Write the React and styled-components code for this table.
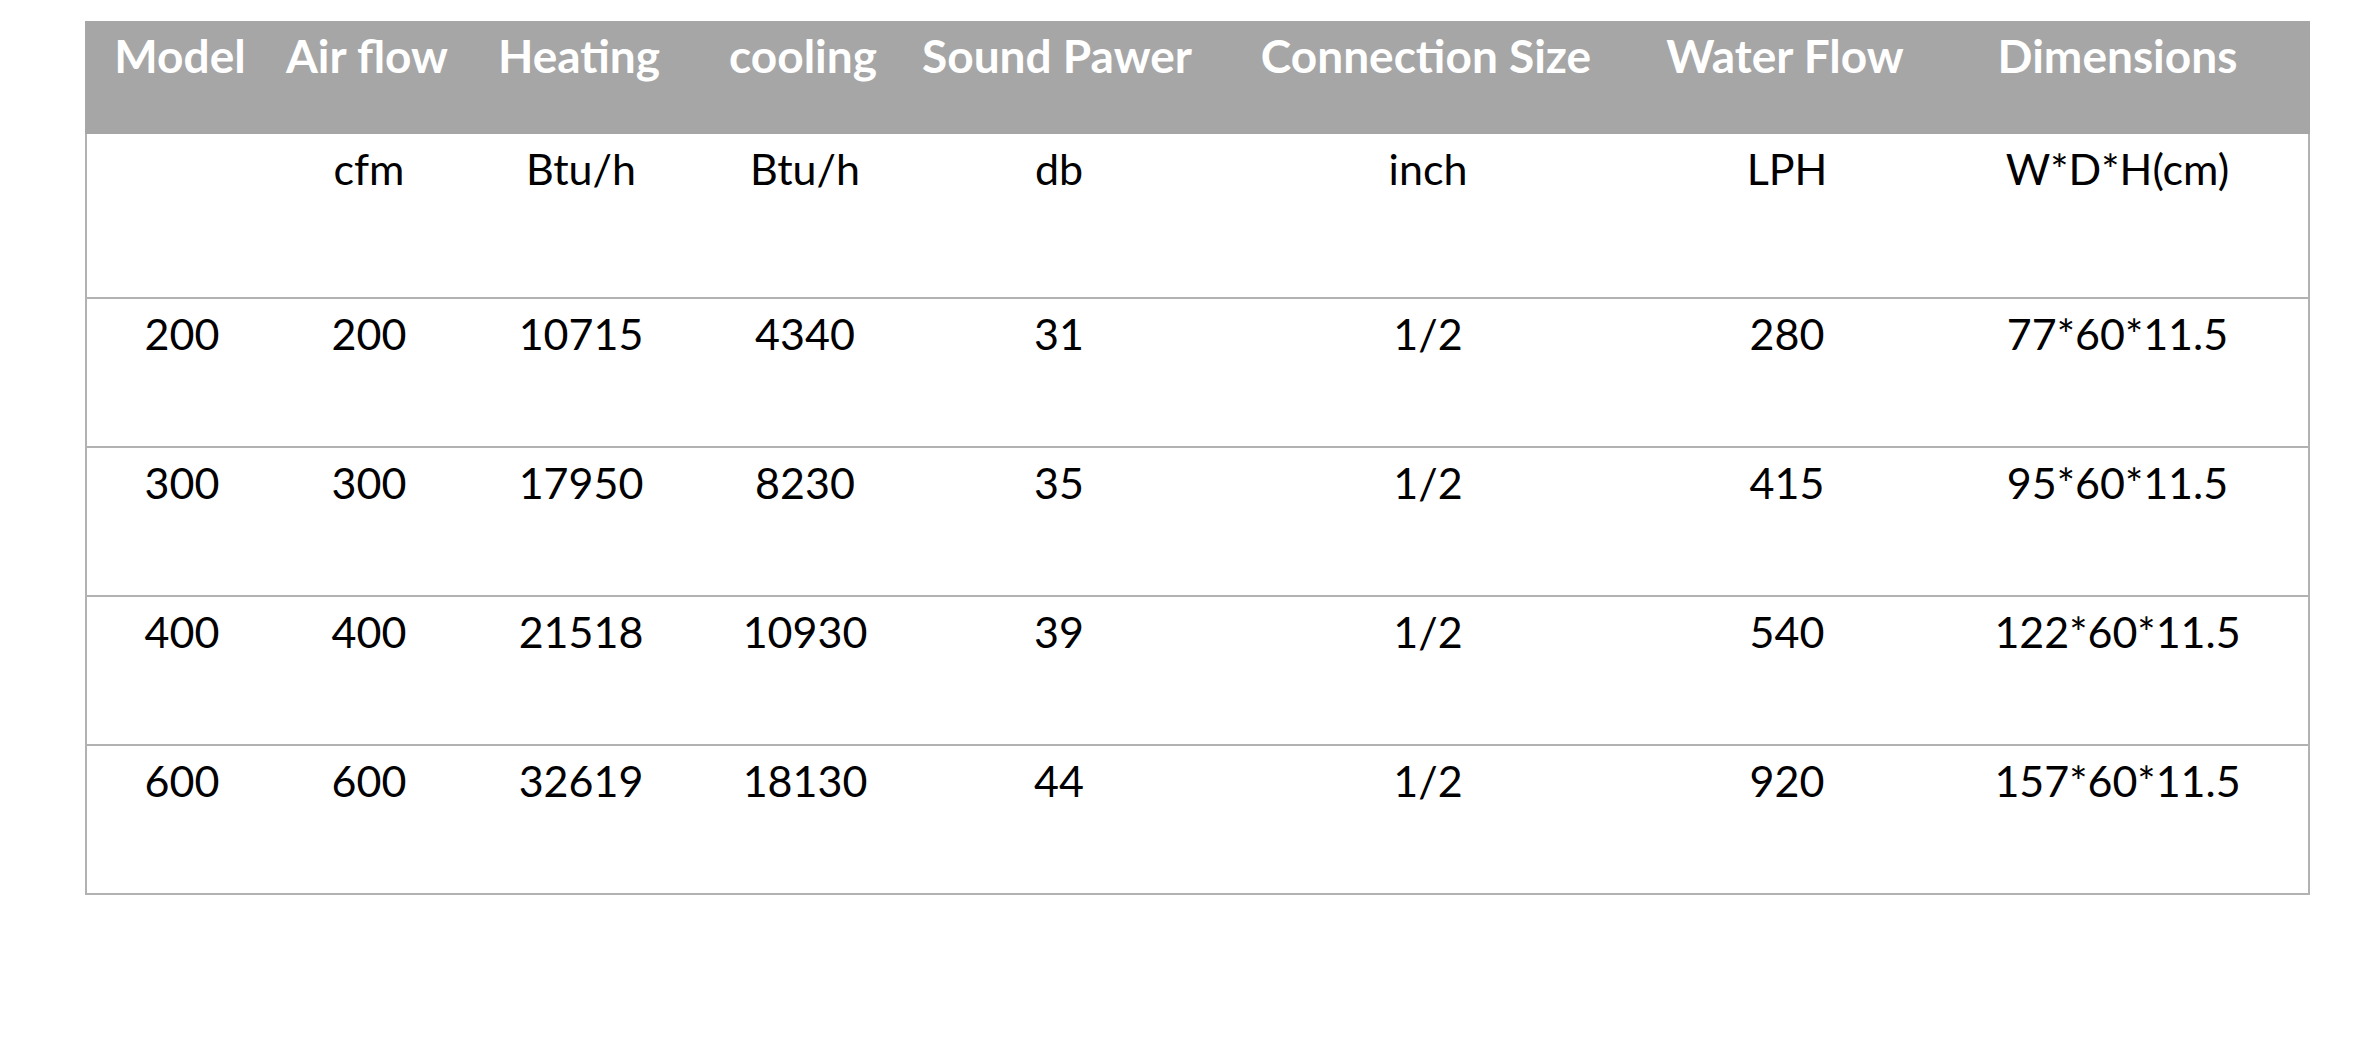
import React from 'react';
import styled, { createGlobalStyle } from 'styled-components';

const GlobalStyle = createGlobalStyle`
  html, body {
    margin: 0;
    padding: 0;
    background: #ffffff;
  }
  body {
    font-family: Lato, "Open Sans", "Liberation Sans", sans-serif;
  }
`;

const Page = styled.div`
  width: 2362px;
  height: 1063px;
  padding: 21px 0 0 85px;
  box-sizing: border-box;
  background: #ffffff;
`;

const Table = styled.div`
  width: 2225px;
  border-left: 2px solid #b2b2b2;
  border-right: 2px solid #b2b2b2;
  border-bottom: 2px solid #b2b2b2;
  box-sizing: border-box;
`;

const Row = styled.div`
  display: grid;
  grid-template-columns: 190px 184px 240px 208px 300px 438px 280px 1fr;
  height: ${(p) => p.$height}px;
  box-sizing: border-box;
  background: ${(p) => (p.$head ? '#a6a6a6' : '#ffffff')};
  border-top: ${(p) => (p.$divided ? '2px solid #b2b2b2' : 'none')};
  margin-left: ${(p) => (p.$head ? '-2px' : '0')};
  margin-right: ${(p) => (p.$head ? '-2px' : '0')};
`;

const Cell = styled.div`
  text-align: center;
  white-space: nowrap;
  padding-top: ${(p) => (p.$head ? 7 : 9)}px;
  font-size: ${(p) => (p.$head ? 46 : 43)}px;
  line-height: 1.2;
  font-weight: ${(p) => (p.$head ? 700 : 400)};
  color: ${(p) => (p.$head ? '#ffffff' : '#000000')};
`;

const headers = [
  'Model',
  'Air flow',
  'Heating',
  'cooling',
  'Sound Pawer',
  'Connection Size',
  'Water Flow',
  'Dimensions',
];

const units = ['', 'cfm', 'Btu/h', 'Btu/h', 'db', 'inch', 'LPH', 'W*D*H(cm)'];

const rows = [
  ['200', '200', '10715', '4340', '31', '1/2', '280', '77*60*11.5'],
  ['300', '300', '17950', '8230', '35', '1/2', '415', '95*60*11.5'],
  ['400', '400', '21518', '10930', '39', '1/2', '540', '122*60*11.5'],
  ['600', '600', '32619', '18130', '44', '1/2', '920', '157*60*11.5'],
];

const App = () => {
  return (
    <Page>
      <GlobalStyle />
      <Table>
        <Row $head $height={113}>
          {headers.map((h) => (
            <Cell key={h} $head>
              {h}
            </Cell>
          ))}
        </Row>
        <Row $height={163}>
          {units.map((u, i) => (
            <Cell key={i}>{u}</Cell>
          ))}
        </Row>
        {rows.map((r, i) => (
          <Row key={i} $divided $height={149}>
            {r.map((v, j) => (
              <Cell key={j}>{v}</Cell>
            ))}
          </Row>
        ))}
      </Table>
    </Page>
  );
};

export default App;
